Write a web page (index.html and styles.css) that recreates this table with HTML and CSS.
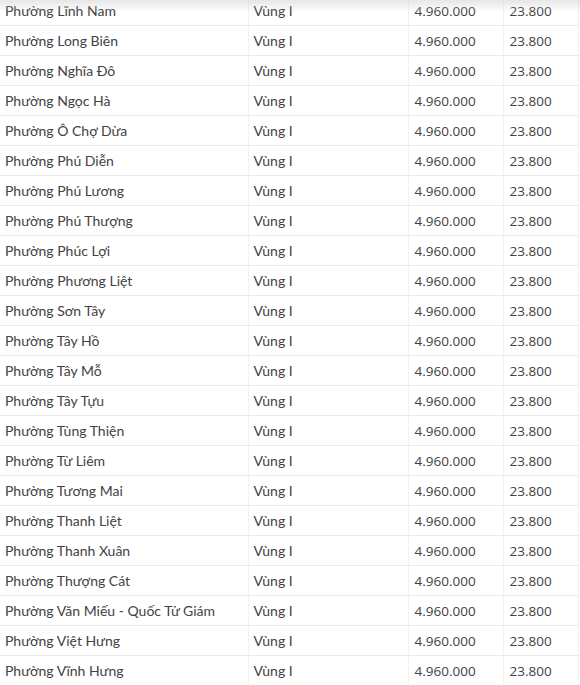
FILE: index.html
```html
<!DOCTYPE html>
<html lang="vi">
<head>
<meta charset="utf-8">
<link rel="stylesheet" href="styles.css">
</head>
<body>
<div class="wrap">
<table class="tbl">
<colgroup><col class="c1"><col class="c2"><col class="c3"><col class="c4"></colgroup>
<tbody>
<tr><td>Phường Lĩnh Nam</td><td>Vùng I</td><td class="num">4.960.000</td><td class="num">23.800</td></tr>
<tr><td>Phường Long Biên</td><td>Vùng I</td><td class="num">4.960.000</td><td class="num">23.800</td></tr>
<tr><td>Phường Nghĩa Đô</td><td>Vùng I</td><td class="num">4.960.000</td><td class="num">23.800</td></tr>
<tr><td>Phường Ngọc Hà</td><td>Vùng I</td><td class="num">4.960.000</td><td class="num">23.800</td></tr>
<tr><td>Phường Ô Chợ Dừa</td><td>Vùng I</td><td class="num">4.960.000</td><td class="num">23.800</td></tr>
<tr><td>Phường Phú Diễn</td><td>Vùng I</td><td class="num">4.960.000</td><td class="num">23.800</td></tr>
<tr><td>Phường Phú Lương</td><td>Vùng I</td><td class="num">4.960.000</td><td class="num">23.800</td></tr>
<tr><td>Phường Phú Thượng</td><td>Vùng I</td><td class="num">4.960.000</td><td class="num">23.800</td></tr>
<tr><td>Phường Phúc Lợi</td><td>Vùng I</td><td class="num">4.960.000</td><td class="num">23.800</td></tr>
<tr><td>Phường Phương Liệt</td><td>Vùng I</td><td class="num">4.960.000</td><td class="num">23.800</td></tr>
<tr><td>Phường Sơn Tây</td><td>Vùng I</td><td class="num">4.960.000</td><td class="num">23.800</td></tr>
<tr><td>Phường Tây Hồ</td><td>Vùng I</td><td class="num">4.960.000</td><td class="num">23.800</td></tr>
<tr><td>Phường Tây Mỗ</td><td>Vùng I</td><td class="num">4.960.000</td><td class="num">23.800</td></tr>
<tr><td>Phường Tây Tựu</td><td>Vùng I</td><td class="num">4.960.000</td><td class="num">23.800</td></tr>
<tr><td>Phường Tùng Thiện</td><td>Vùng I</td><td class="num">4.960.000</td><td class="num">23.800</td></tr>
<tr><td>Phường Từ Liêm</td><td>Vùng I</td><td class="num">4.960.000</td><td class="num">23.800</td></tr>
<tr><td>Phường Tương Mai</td><td>Vùng I</td><td class="num">4.960.000</td><td class="num">23.800</td></tr>
<tr><td>Phường Thanh Liệt</td><td>Vùng I</td><td class="num">4.960.000</td><td class="num">23.800</td></tr>
<tr><td>Phường Thanh Xuân</td><td>Vùng I</td><td class="num">4.960.000</td><td class="num">23.800</td></tr>
<tr><td>Phường Thượng Cát</td><td>Vùng I</td><td class="num">4.960.000</td><td class="num">23.800</td></tr>
<tr><td>Phường Văn Miếu - Quốc Tử Giám</td><td>Vùng I</td><td class="num">4.960.000</td><td class="num">23.800</td></tr>
<tr><td>Phường Việt Hưng</td><td>Vùng I</td><td class="num">4.960.000</td><td class="num">23.800</td></tr>
<tr><td>Phường Vĩnh Hưng</td><td>Vùng I</td><td class="num">4.960.000</td><td class="num">23.800</td></tr>
</tbody>
</table>
<div class="shade"></div>
</div>
</body>
</html>
```
FILE: styles.css
```css
html, body {
  margin: 0;
  padding: 0;
  background: #ffffff;
}
.wrap {
  position: relative;
  width: 580px;
  height: 685px;
  overflow: hidden;
}
.tbl {
  border-collapse: collapse;
  width: 578px;
  margin-top: -4px;
  table-layout: fixed;
  font-family: Lato, "Noto Sans", sans-serif;
  font-size: 14px;
  color: #424242;
}
.c1 { width: 248px; }
.c2 { width: 160px; }
.c3 { width: 95px; }
.c4 { width: 75px; }
.tbl td {
  height: 29px;
  padding: 0 0 0 5px;
  border-bottom: 1px solid #ebebeb;
  border-right: 1px solid #f2f2f2;
  white-space: nowrap;
  vertical-align: middle;
}
.tbl td.num {
  font-family: "Open Sans", sans-serif;
  font-size: 13.5px;
  padding-left: 6px;
}
.shade {
  position: absolute;
  left: 0;
  top: 0;
  width: 100%;
  height: 12px;
  background: linear-gradient(to bottom, rgba(200,200,200,0.45), rgba(255,255,255,0));
  pointer-events: none;
}
```
